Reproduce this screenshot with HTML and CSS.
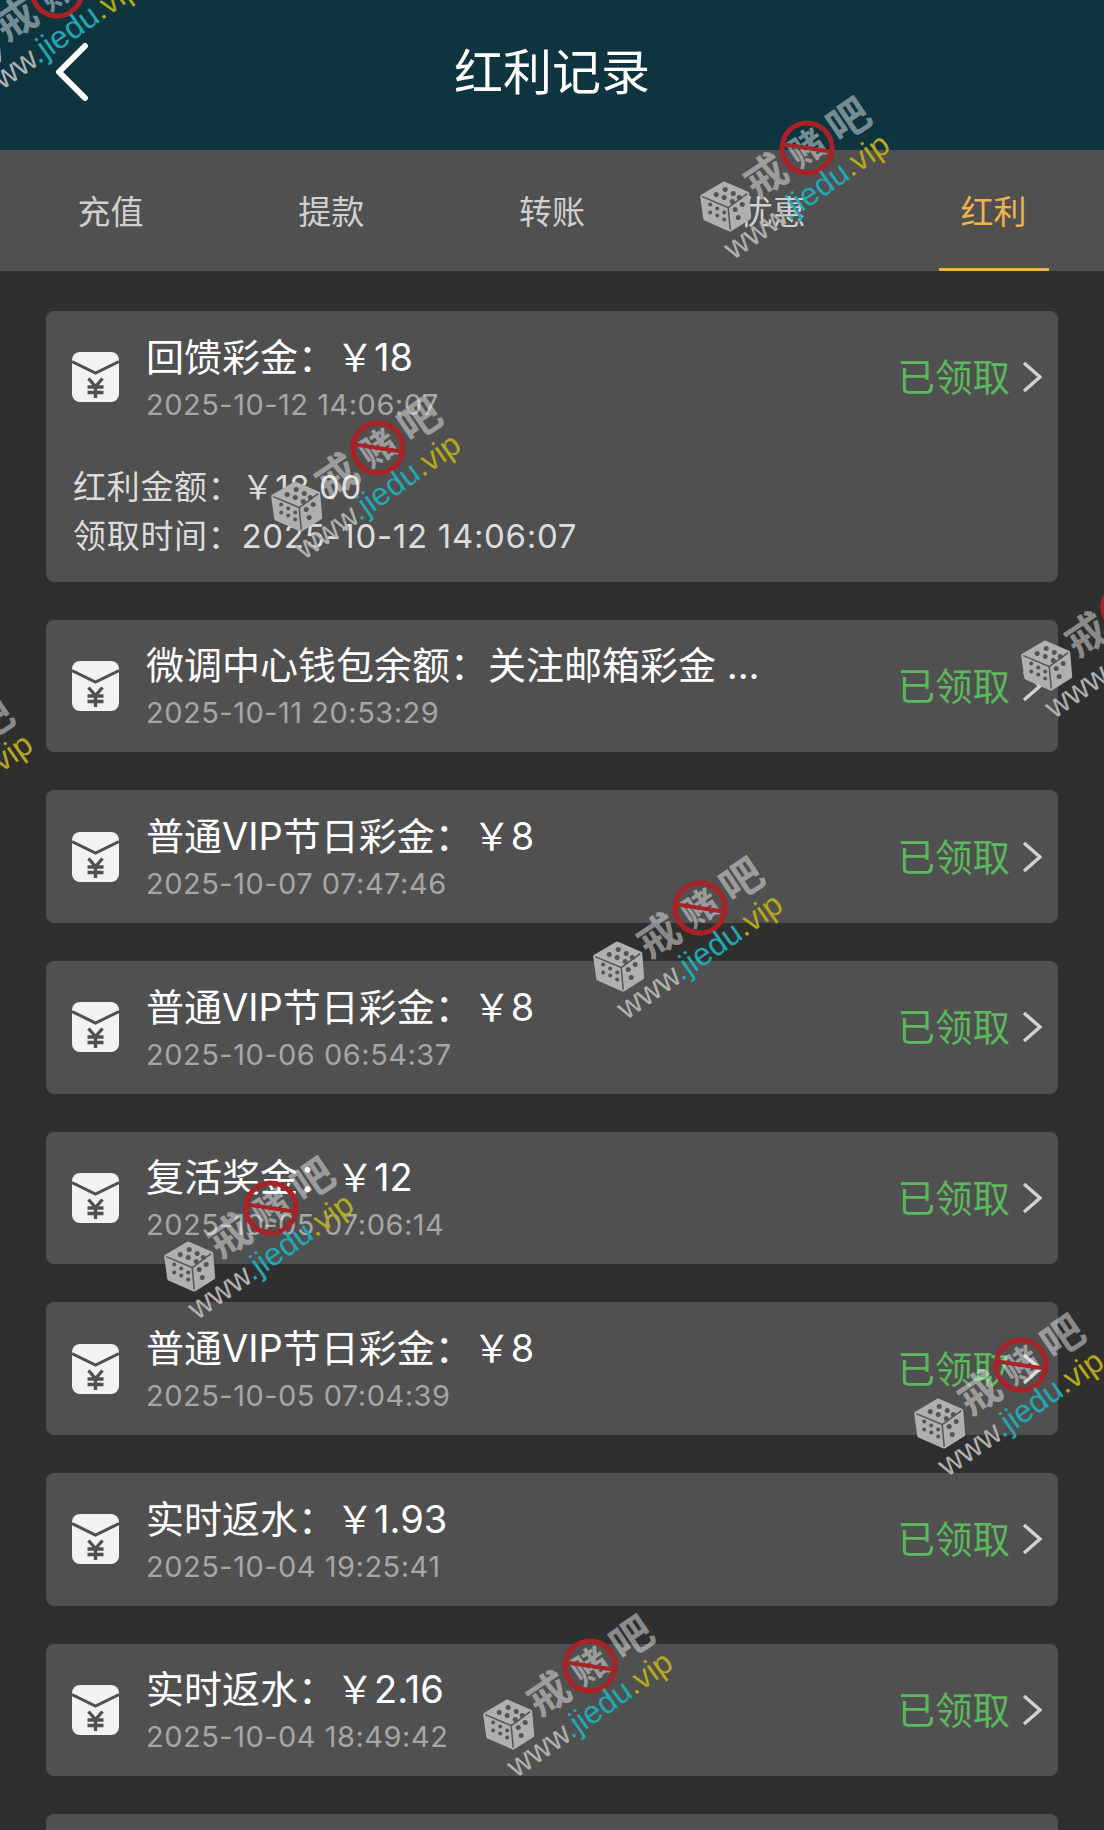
FILE: index.html
```html
<!DOCTYPE html>
<html lang="zh-CN">
<head>
    <meta charset="UTF-8" />
    <meta name="viewport" content="width=device-width, initial-scale=1.0" />
    <title>红利记录</title>
    <link rel="stylesheet" href="styles.css">
</head>
<body>
    <svg class="defs" width="0" height="0">
        <symbol id="redPacket" viewBox="0 0 47 50">
            <rect width="47" height="50" rx="8" fill="#f2f2f2" />
            <path d="M0 9.500 23.500 21 47 9.500" fill="none" stroke="#505050" stroke-width="3" />
            <path d="M16.500 26.500 23.500 34.500 30.500 26.500M15.500 35H31.500M15.500 40.500H31.500M23.500 34.500V46" fill="none" stroke="#505050" stroke-width="3.400" />
        </symbol>
        <symbol id="watermark" viewBox="-170 -170 340 340">
            <g transform="rotate(-34)">
                <g transform="translate(-100 2) rotate(34)">
                    <path d="M-23 -9-1 -22 22 -12 24 12 5 24-20 13Z" fill="#b0b0b0" stroke="#b0b0b0" stroke-width="4" stroke-linejoin="round" />
                    <path d="M-23 -9 3 2 5 24M3 2 22 -12" fill="none" stroke="#555" stroke-width="1.500" />
                    <g fill="#555">
                        <circle cx="-9" cy="-11" r="2.500" /><circle cx="0" cy="-16" r="2.500" /><circle cx="-1" cy="-8" r="2.500" /><circle cx="8" cy="-12" r="2.500" /><circle cx="7" cy="-4" r="2.500" /><circle cx="14" cy="-8" r="2.500" />
                        <circle cx="-15" cy="-1" r="2" /><circle cx="-8" cy="3" r="2" /><circle cx="-1" cy="7" r="2" /><circle cx="-15" cy="7" r="2" /><circle cx="-8" cy="10" r="2" /><circle cx="-1" cy="14" r="2" />
                        <circle cx="10" cy="4" r="2.500" /><circle cx="17" cy="-1" r="2.500" /><circle cx="13" cy="12" r="2.500" />
                    </g>
                </g>
                <text class="wm-char" x="-50" y="15">戒</text>
                <text class="wm-char" x="50" y="15">吧</text>
                <text class="wm-char wm-small" x="0" y="13">赌</text>
                <circle r="25" fill="none" stroke="#a82226" stroke-width="5" />
                <path d="M-18.500 -17 18.500 17" stroke="#a82226" stroke-width="4" />
                <text class="wm-url" x="-124" y="52" transform="rotate(-1 -124 52)">www<tspan class="wm-teal">.jiedu</tspan><tspan class="wm-olive">.vip</tspan></text>
            </g>
        </symbol>
    </svg>

    <header class="top-bar">
        <svg class="back-icon" width="34" height="58" viewBox="0 0 34 58">
            <path d="M30 3 4 29 30 55" fill="none" stroke="#fff" stroke-width="6" stroke-linecap="round" stroke-linejoin="round" />
        </svg>
        <div class="page-title">红利记录</div>
    </header>

    <nav class="tabs">
        <div class="tab"><span class="tab-label">充值</span></div>
        <div class="tab"><span class="tab-label">提款</span></div>
        <div class="tab"><span class="tab-label">转账</span></div>
        <div class="tab"><span class="tab-label">优惠</span></div>
        <div class="tab active"><span class="tab-label">红利</span></div>
    </nav>

    <main class="record-list">
        <section class="record">
            <div class="record-row">
                <svg class="packet-icon"><use href="#redPacket" /></svg>
                <div class="record-info">
                    <div class="record-title">回馈彩金：￥18</div>
                    <div class="record-date">2025-10-12 14:06:07</div>
                </div>
                <div class="record-status">已领取</div>
                <svg class="chevron" viewBox="0 0 20 32"><path d="M2 2 18 16 2 30" /></svg>
            </div>
            <div class="record-detail">
                <p>红利金额：￥18.00</p>
                <p>领取时间：2025-10-12 14:06:07</p>
            </div>
        </section>
        <section class="record">
            <div class="record-row">
                <svg class="packet-icon"><use href="#redPacket" /></svg>
                <div class="record-info">
                    <div class="record-title">微调中心钱包余额：关注邮箱彩金 ...</div>
                    <div class="record-date">2025-10-11 20:53:29</div>
                </div>
                <div class="record-status">已领取</div>
                <svg class="chevron" viewBox="0 0 20 32"><path d="M2 2 18 16 2 30" /></svg>
            </div>
        </section>
        <section class="record">
            <div class="record-row">
                <svg class="packet-icon"><use href="#redPacket" /></svg>
                <div class="record-info">
                    <div class="record-title">普通VIP节日彩金：￥8</div>
                    <div class="record-date">2025-10-07 07:47:46</div>
                </div>
                <div class="record-status">已领取</div>
                <svg class="chevron" viewBox="0 0 20 32"><path d="M2 2 18 16 2 30" /></svg>
            </div>
        </section>
        <section class="record">
            <div class="record-row">
                <svg class="packet-icon"><use href="#redPacket" /></svg>
                <div class="record-info">
                    <div class="record-title">普通VIP节日彩金：￥8</div>
                    <div class="record-date">2025-10-06 06:54:37</div>
                </div>
                <div class="record-status">已领取</div>
                <svg class="chevron" viewBox="0 0 20 32"><path d="M2 2 18 16 2 30" /></svg>
            </div>
        </section>
        <section class="record">
            <div class="record-row">
                <svg class="packet-icon"><use href="#redPacket" /></svg>
                <div class="record-info">
                    <div class="record-title">复活奖金：￥12</div>
                    <div class="record-date">2025-10-05 07:06:14</div>
                </div>
                <div class="record-status">已领取</div>
                <svg class="chevron" viewBox="0 0 20 32"><path d="M2 2 18 16 2 30" /></svg>
            </div>
        </section>
        <section class="record">
            <div class="record-row">
                <svg class="packet-icon"><use href="#redPacket" /></svg>
                <div class="record-info">
                    <div class="record-title">普通VIP节日彩金：￥8</div>
                    <div class="record-date">2025-10-05 07:04:39</div>
                </div>
                <div class="record-status">已领取</div>
                <svg class="chevron" viewBox="0 0 20 32"><path d="M2 2 18 16 2 30" /></svg>
            </div>
        </section>
        <section class="record">
            <div class="record-row">
                <svg class="packet-icon"><use href="#redPacket" /></svg>
                <div class="record-info">
                    <div class="record-title">实时返水：￥1.93</div>
                    <div class="record-date">2025-10-04 19:25:41</div>
                </div>
                <div class="record-status">已领取</div>
                <svg class="chevron" viewBox="0 0 20 32"><path d="M2 2 18 16 2 30" /></svg>
            </div>
        </section>
        <section class="record">
            <div class="record-row">
                <svg class="packet-icon"><use href="#redPacket" /></svg>
                <div class="record-info">
                    <div class="record-title">实时返水：￥2.16</div>
                    <div class="record-date">2025-10-04 18:49:42</div>
                </div>
                <div class="record-status">已领取</div>
                <svg class="chevron" viewBox="0 0 20 32"><path d="M2 2 18 16 2 30" /></svg>
            </div>
        </section>
        <section class="record"></section>
    </main>

    <!-- stamped over the whole screenshot -->
    <svg class="wm wm-1"><use href="#watermark" /></svg>
    <svg class="wm wm-2"><use href="#watermark" /></svg>
    <svg class="wm wm-3"><use href="#watermark" /></svg>
    <svg class="wm wm-4"><use href="#watermark" /></svg>
    <svg class="wm wm-5"><use href="#watermark" /></svg>
    <svg class="wm wm-6"><use href="#watermark" /></svg>
    <svg class="wm wm-7"><use href="#watermark" /></svg>
    <svg class="wm wm-8"><use href="#watermark" /></svg>
    <svg class="wm wm-9"><use href="#watermark" /></svg>
</body>
</html>
```

FILE: styles.css
```css
html, body {
    margin: 0;
    height: 1830px;
    overflow: hidden;
}
body {
    position: relative;
    background-color: #2f2f2f;
    font-family: "Inter", "Noto Sans CJK SC", sans-serif;
    color: #fff;
}
.defs { position: absolute; }

.top-bar {
    position: relative;
    height: 150px;
    box-sizing: border-box;
    padding: 0 0 6px 55px;
    display: flex;
    align-items: center;
    background-color: #0d343f;
}
.page-title {
    position: absolute;
    left: 0;
    right: 0;
    margin-top: 2px;
    text-align: center;
    font-size: 49px;
    line-height: 60px;
}

.tabs {
    height: 121px;
    display: grid;
    grid-template-columns: repeat(5, 1fr);
    background-color: #505050;
}
.tab {
    display: flex;
    justify-content: center;
    font-size: 33px;
    color: #d0d0d0;
}
.tab-label {
    width: 110px;
    box-sizing: border-box;
    padding-top: 1px;
    display: flex;
    align-items: center;
    justify-content: center;
    border-bottom: 3px solid transparent;
}
.tab.active { color: #f0b34a; }
.tab.active .tab-label { border-bottom-color: #f0b34a; }

.record-list {
    height: 1559px;
    box-sizing: border-box;
    overflow: hidden;
    padding: 40px 46px 0;
    display: flex;
    flex-direction: column;
    gap: 38px;
}
.record {
    min-height: 132.67px;
    flex-shrink: 0;
    background-color: #505050;
    border-radius: 8px;
}
.record-row {
    height: 132.67px;
    box-sizing: border-box;
    padding: 0 16px 0 26px;
    display: flex;
    align-items: center;
}
.packet-icon {
    width: 47px;
    height: 50px;
    margin-right: 27px;
    flex-shrink: 0;
}
.record-info {
    flex: 1;
    padding-top: 7px;
}
.record-title {
    font-size: 38px;
    line-height: 47px;
    white-space: nowrap;
}
.record-date {
    font-size: 29px;
    line-height: 47px;
    letter-spacing: 0.5px;
    color: #a6a6a6;
}
.record-status {
    margin-bottom: 5px;
    font-size: 37.500px;
    color: #5cb85c;
}
.chevron {
    width: 20px;
    height: 32px;
    margin-left: 12px;
    flex-shrink: 0;
}
.chevron path {
    fill: none;
    stroke: #d2d2d2;
    stroke-width: 3.500;
}
.record-detail {
    padding: 19px 27px 21px;
    font-size: 33px;
    line-height: 49px;
    letter-spacing: 0.7px;
    color: #dcdcdc;
}
.record-detail p { margin: 0; }

.wm {
    position: absolute;
    width: 340px;
    height: 340px;
    overflow: visible;
    pointer-events: none;
}
.wm-char {
    font-family: "Noto Sans CJK SC", sans-serif;
    font-size: 42px;
    font-weight: 700;
    text-anchor: middle;
    fill: #fff;
    fill-opacity: 0.45;
}
.wm-small { font-size: 36px; }
.wm-url {
    font-family: "Liberation Sans", sans-serif;
    font-size: 32px;
    fill: #b0b0b0;
}
.wm-teal { fill: #1fa9b5; }
.wm-olive { fill: #b5a91a; }
.wm-1 { left: -113px; top: -179px; }
.wm-2 { left: 637px; top: -22px; }
.wm-3 { left: 208px; top: 278px; }
.wm-4 { left: 958px; top: 437px; }
.wm-5 { left: -220px; top: 578px; }
.wm-6 { left: 530px; top: 738px; }
.wm-7 { left: 101px; top: 1038px; }
.wm-8 { left: 851px; top: 1195px; }
.wm-9 { left: 420px; top: 1496px; }
```
